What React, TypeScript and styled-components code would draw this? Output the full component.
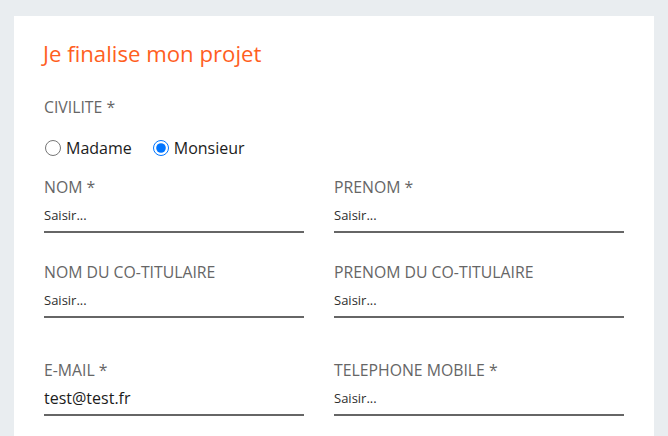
import React, { useState } from 'react'
import styled, { createGlobalStyle } from 'styled-components'

const GlobalStyle = createGlobalStyle`
  html, body {
    margin: 0;
    padding: 0;
    background: #e9edf0;
    font-family: 'Open Sans', 'Noto Sans', sans-serif;
    overflow: hidden;
  }
`

const Page = styled.div`
  padding: 16px 14px 0 14px;
  height: 436px;
  box-sizing: border-box;
  overflow: hidden;
`

const Card = styled.form`
  background: #ffffff;
  padding: 23px 30px 0 29px;
  height: 420px;
  box-sizing: border-box;
`

const Title = styled.h2`
  margin: 0;
  font-size: 22.2px;
  line-height: 30px;
  font-weight: 400;
  color: #ff5f1f;
`

const Label = styled.label`
  display: block;
  padding: 0;
  font-size: 15.8px;
  line-height: 20px;
  color: #666666;
  text-transform: uppercase;
`

const Civility = styled.fieldset`
  border: none;
  margin: 28px 0 0 0;
  padding: 0 0 0 1px;
`

const RadioRow = styled.div`
  display: flex;
  align-items: center;
  gap: 21px;
  margin-top: 20px;
  padding-left: 1px;
`

const RadioOption = styled.label`
  display: flex;
  align-items: center;
  gap: 5px;
  font-size: 16px;
  line-height: 22px;
  color: #1c1c1c;
  cursor: pointer;
`

const Radio = styled.input.attrs({ type: 'radio' })`
  width: 16px;
  height: 16px;
  margin: 0;
  accent-color: #0075ff;
`

const Grid = styled.div`
  display: grid;
  grid-template-columns: 260px 1fr;
  column-gap: 30px;
  margin-top: 18px;
  padding-left: 1px;
`

const Field = styled.div<{ $gap: number }>`
  display: flex;
  flex-direction: column;
  margin-top: ${({ $gap }) => $gap}px;
`

const Input = styled.input<{ $filled?: boolean }>`
  box-sizing: border-box;
  width: 100%;
  height: 34px;
  margin-top: 2px;
  padding: 0;
  border: none;
  border-bottom: 2px solid #666666;
  background: transparent;
  outline: none;
  font-family: inherit;
  font-size: ${({ $filled }) => ($filled ? '16px' : '13px')};
  color: #1c1c1c;

  &::placeholder {
    color: #2e2e2e;
    opacity: 1;
  }
`

type FieldDef = { label: string; value?: string; gap: number }

const fields: FieldDef[] = [
  { label: 'Nom *', gap: 0 },
  { label: 'Prenom *', gap: 0 },
  { label: 'Nom du co-titulaire', gap: 29 },
  { label: 'Prenom du co-titulaire', gap: 29 },
  { label: 'E-mail *', value: 'test@test.fr', gap: 42 },
  { label: 'Telephone mobile *', gap: 42 },
]

export default function App() {
  const [civility, setCivility] = useState('monsieur')

  return (
    <Page>
      <GlobalStyle />
      <Card onSubmit={(e) => e.preventDefault()}>
        <Title>Je finalise mon projet</Title>
        <Civility>
          <Label as="legend">Civilite *</Label>
          <RadioRow>
            <RadioOption>
              <Radio name="civ" checked={civility === 'madame'} onChange={() => setCivility('madame')} />
              Madame
            </RadioOption>
            <RadioOption>
              <Radio name="civ" checked={civility === 'monsieur'} onChange={() => setCivility('monsieur')} />
              Monsieur
            </RadioOption>
          </RadioRow>
        </Civility>
        <Grid>
          {fields.map((f) => (
            <Field key={f.label} $gap={f.gap}>
              <Label>{f.label}</Label>
              <Input placeholder="Saisir..." defaultValue={f.value} $filled={!!f.value} />
            </Field>
          ))}
        </Grid>
      </Card>
    </Page>
  )
}
